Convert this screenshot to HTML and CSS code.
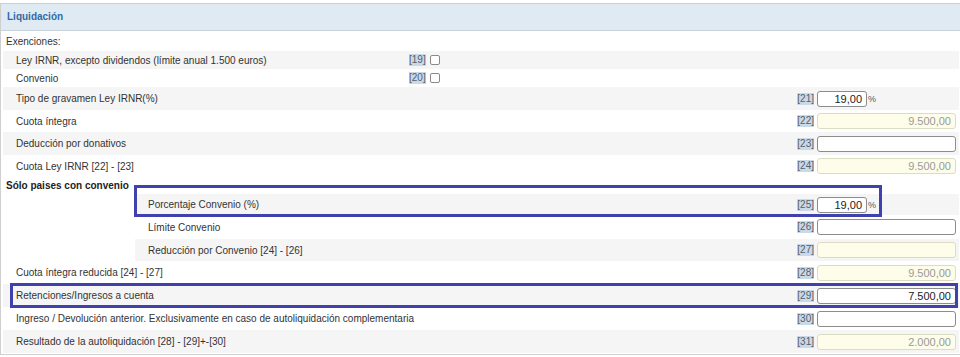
FILE: index.html
```html
<!DOCTYPE html>
<html lang="es">
<head>
<meta charset="utf-8">
<title>Liquidación</title>
<link rel="stylesheet" href="styles.css">
</head>
<body>
<div class="panel">
  <div class="panel-head">Liquidación</div>
  <div class="panel-body">
    <div class="caption">Exenciones:</div>
    <div class="row chk odd">
      <span class="label">Ley IRNR, excepto dividendos (límite anual 1.500 euros)</span>
      <span class="code">[19]</span><span class="box"></span>
    </div>
    <div class="row chk">
      <span class="label">Convenio</span>
      <span class="code">[20]</span><span class="box"></span>
    </div>
    <div class="row h23 odd">
      <span class="label">Tipo de gravamen Ley IRNR(%)</span>
      <span class="code">[21]</span>
      <span class="field"><span class="inp small edit">19,00</span><span class="pct">%</span></span>
    </div>
    <div class="row h22">
      <span class="label">Cuota íntegra</span>
      <span class="code">[22]</span>
      <span class="field"><span class="inp ro">9.500,00</span></span>
    </div>
    <div class="row h23 odd">
      <span class="label">Deducción por donativos</span>
      <span class="code">[23]</span>
      <span class="field"><span class="inp edit"></span></span>
    </div>
    <div class="row h22">
      <span class="label">Cuota Ley IRNR [22] - [23]</span>
      <span class="code">[24]</span>
      <span class="field"><span class="inp ro">9.500,00</span></span>
    </div>
    <div class="group-title">Sólo paises con convenio</div>
    <div class="row sub h21 odd">
      <span class="label">Porcentaje Convenio (%)</span>
      <span class="code">[25]</span>
      <span class="field"><span class="inp small edit">19,00</span><span class="pct">%</span></span>
      <span class="mark mark-a"></span>
    </div>
    <div class="row sub h24">
      <span class="label">Límite Convenio</span>
      <span class="code">[26]</span>
      <span class="field"><span class="inp edit"></span></span>
    </div>
    <div class="row sub h22 odd">
      <span class="label">Reducción por Convenio [24] - [26]</span>
      <span class="code">[27]</span>
      <span class="field"><span class="inp ro"></span></span>
    </div>
    <div class="row h23">
      <span class="label">Cuota íntegra reducida [24] - [27]</span>
      <span class="code">[28]</span>
      <span class="field"><span class="inp ro">9.500,00</span></span>
    </div>
    <div class="row h23 odd">
      <span class="label">Retenciones/Ingresos a cuenta</span>
      <span class="code">[29]</span>
      <span class="field"><span class="inp edit">7.500,00</span></span>
      <span class="mark mark-b"></span>
    </div>
    <div class="row h23">
      <span class="label">Ingreso / Devolución anterior. Exclusivamente en caso de autoliquidación complementaria</span>
      <span class="code">[30]</span>
      <span class="field"><span class="inp edit"></span></span>
    </div>
    <div class="row h23 odd">
      <span class="label">Resultado de la autoliquidación [28] - [29]+-[30]</span>
      <span class="code">[31]</span>
      <span class="field"><span class="inp ro">2.000,00</span></span>
    </div>
  </div>
</div>
</body>
</html>
```
FILE: styles.css
```css
html, body {
  margin: 0;
  padding: 0;
  background: #fff;
  overflow: hidden;
}
body {
  font-family: "Liberation Sans", Arial, sans-serif;
  font-size: 10px;
  color: #333;
}
.panel {
  margin-top: 3px;
  width: 962px;
  border: 1px solid #cfcfcf;
  border-right: none;
  box-sizing: border-box;
}
.panel-head {
  height: 26px;
  line-height: 26px;
  background: #dfeaf3;
  border-bottom: 1px solid #c9d3dc;
  padding-left: 6px;
  font-weight: bold;
  color: #2f6aa8;
}
.panel-body {
  padding: 0 3px 1px 2px;
  position: relative;
}
.caption {
  height: 20px;
  line-height: 21px;
  padding-left: 3px;
}
.row {
  display: flex;
  align-items: center;
  padding: 0 3px 0 13px;
  position: relative;
}
.row.odd {
  background: #f5f5f5;
}
.row.chk {
  height: 18px;
}
.row.chk .label {
  width: 393px;
  flex: none;
}
.h21 { height: 21px; }
.h22 { height: 22px; }
.h23 { height: 23px; }
.h24 { height: 24px; }
.row.sub {
  margin-left: 132px;
}
.label {
  flex: 1;
  white-space: nowrap;
}
.code {
  background: #cad9e7;
  color: #54606c;
  line-height: 12px;
}
.box {
  width: 8px;
  height: 8px;
  border: 1px solid #8a8a8a;
  border-radius: 2px;
  margin-left: 4px;
  background: #fff;
}
.field {
  width: 139px;
  margin-left: 3px;
  display: flex;
  align-items: center;
}
.inp {
  box-sizing: border-box;
  height: 16px;
  width: 139px;
  border-radius: 3px;
  text-align: right;
  padding: 0 4px;
  line-height: 14px;
  font-size: 11px;
}
.inp.small {
  width: 50px;
}
.inp.edit {
  border: 1px solid #8c8c8c;
  background: #fff;
  color: #222;
}
.inp.ro {
  border: 1px solid #dcdcc4;
  background: #fdfde9;
  color: #9a9a9a;
}
.pct {
  margin-left: 1px;
  color: #555;
  font-size: 9px;
}
.group-title {
  height: 17px;
  line-height: 18px;
  padding-left: 3px;
  font-weight: bold;
  color: #222;
}
.mark {
  position: absolute;
  border: 3px solid #4141ad;
  pointer-events: none;
}
.mark-a {
  left: -1px;
  top: -9px;
  width: 742px;
  height: 26px;
}
.mark-b {
  left: 7px;
  top: -1px;
  width: 942px;
  height: 19px;
}
```
